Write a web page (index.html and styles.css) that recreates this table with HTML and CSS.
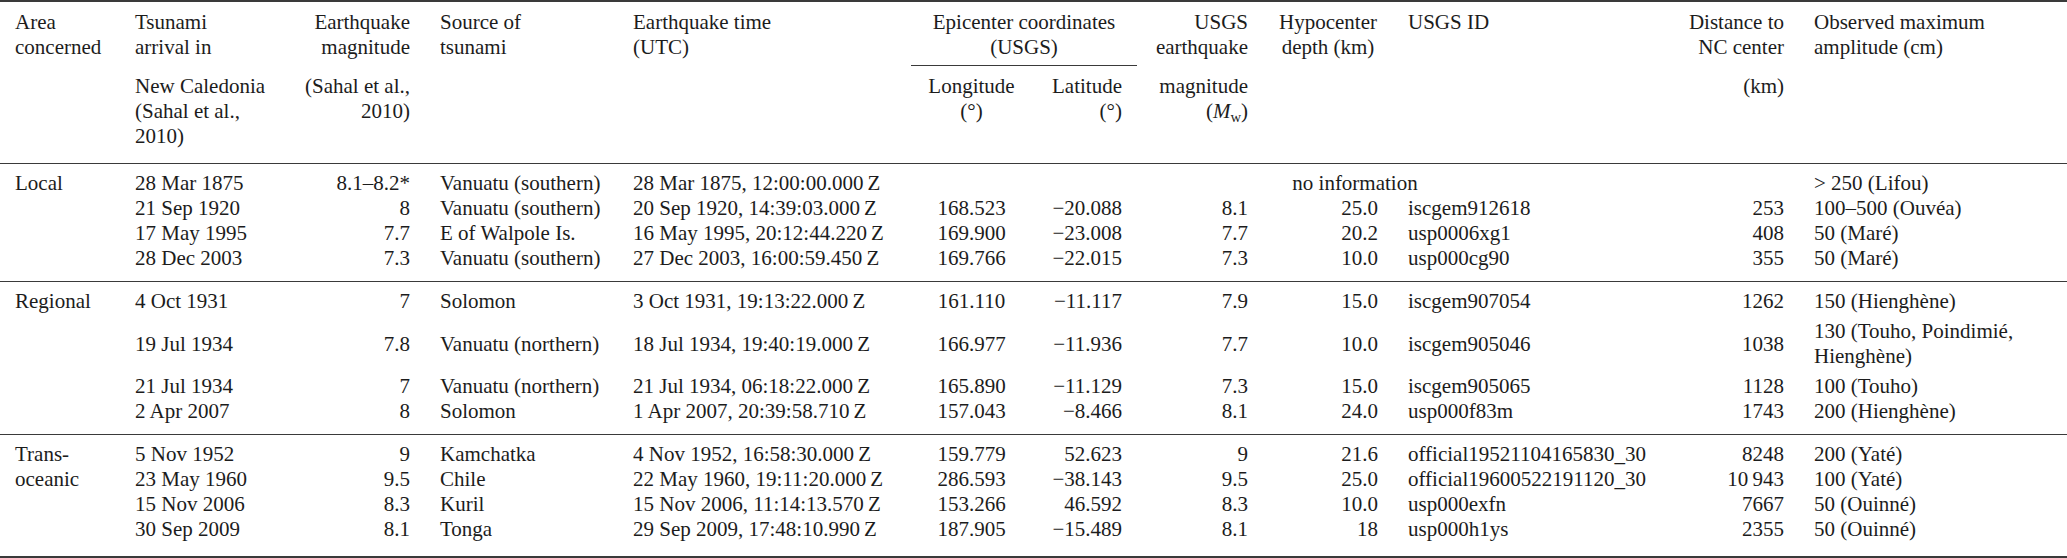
FILE: index.html
```html
<!DOCTYPE html>
<html lang="en">
<head>
<meta charset="utf-8">
<title>Tsunami events</title>
<link rel="stylesheet" href="styles.css">
</head>
<body>
<table class="tbl">
<colgroup>
<col class="w1"><col class="w2"><col class="w3"><col class="w4"><col class="w5"><col class="w6"><col class="w7"><col class="w8"><col class="w9"><col class="w10"><col class="w11"><col class="w12">
</colgroup>
<thead>
<tr class="h1">
<th class="l">Area<br>concerned</th>
<th class="l">Tsunami<br>arrival in</th>
<th class="r">Earthquake<br>magnitude</th>
<th class="l">Source of<br>tsunami</th>
<th class="l">Earthquake time<br>(UTC)</th>
<th class="c cmid" colspan="2">Epicenter coordinates<br>(USGS)</th>
<th class="r">USGS<br>earthquake</th>
<th class="c">Hypocenter<br>depth (km)</th>
<th class="l">USGS ID</th>
<th class="r">Distance to<br>NC center</th>
<th class="l">Observed maximum<br>amplitude (cm)</th>
</tr>
<tr class="h2">
<th></th>
<th class="l">New Caledonia<br>(Sahal et al.,<br>2010)</th>
<th class="r">(Sahal et al.,<br>2010)</th>
<th></th>
<th></th>
<th class="c">Longitude<br>(°)</th>
<th class="r">Latitude<br>(°)</th>
<th class="r">magnitude<br>(<i>M</i><sub>w</sub>)</th>
<th></th>
<th></th>
<th class="r">(km)</th>
<th></th>
</tr>
</thead>
<tbody>
<tr class="first">
<td class="l area" rowspan="4">Local</td>
<td class="l">28 Mar 1875</td>
<td class="r">8.1–8.2*</td>
<td class="l">Vanuatu (southern)</td>
<td class="l">28 Mar 1875, 12:00:00.000&thinsp;Z</td>
<td class="c" colspan="6">no information</td>
<td class="l">&gt; 250 (Lifou)</td>
</tr>
<tr>
<td class="l">21 Sep 1920</td>
<td class="r">8</td>
<td class="l">Vanuatu (southern)</td>
<td class="l">20 Sep 1920, 14:39:03.000&thinsp;Z</td>
<td class="c">168.523</td>
<td class="r">−20.088</td>
<td class="r">8.1</td>
<td class="r">25.0</td>
<td class="l">iscgem912618</td>
<td class="r">253</td>
<td class="l">100–500 (Ouvéa)</td>
</tr>
<tr>
<td class="l">17 May 1995</td>
<td class="r">7.7</td>
<td class="l">E of Walpole Is.</td>
<td class="l">16 May 1995, 20:12:44.220&thinsp;Z</td>
<td class="c">169.900</td>
<td class="r">−23.008</td>
<td class="r">7.7</td>
<td class="r">20.2</td>
<td class="l">usp0006xg1</td>
<td class="r">408</td>
<td class="l">50 (Maré)</td>
</tr>
<tr class="last">
<td class="l">28 Dec 2003</td>
<td class="r">7.3</td>
<td class="l">Vanuatu (southern)</td>
<td class="l">27 Dec 2003, 16:00:59.450&thinsp;Z</td>
<td class="c">169.766</td>
<td class="r">−22.015</td>
<td class="r">7.3</td>
<td class="r">10.0</td>
<td class="l">usp000cg90</td>
<td class="r">355</td>
<td class="l">50 (Maré)</td>
</tr>
</tbody>
<tbody>
<tr class="first">
<td class="l area" rowspan="4">Regional</td>
<td class="l">4 Oct 1931</td>
<td class="r">7</td>
<td class="l">Solomon</td>
<td class="l">3 Oct 1931, 19:13:22.000&thinsp;Z</td>
<td class="c">161.110</td>
<td class="r">−11.117</td>
<td class="r">7.9</td>
<td class="r">15.0</td>
<td class="l">iscgem907054</td>
<td class="r">1262</td>
<td class="l">150 (Hienghène)</td>
</tr>
<tr class="tall">
<td class="l">19 Jul 1934</td>
<td class="r">7.8</td>
<td class="l">Vanuatu (northern)</td>
<td class="l">18 Jul 1934, 19:40:19.000&thinsp;Z</td>
<td class="c">166.977</td>
<td class="r">−11.936</td>
<td class="r">7.7</td>
<td class="r">10.0</td>
<td class="l">iscgem905046</td>
<td class="r">1038</td>
<td class="l">130 (Touho, Poindimié, Hienghène)</td>
</tr>
<tr>
<td class="l">21 Jul 1934</td>
<td class="r">7</td>
<td class="l">Vanuatu (northern)</td>
<td class="l">21 Jul 1934, 06:18:22.000&thinsp;Z</td>
<td class="c">165.890</td>
<td class="r">−11.129</td>
<td class="r">7.3</td>
<td class="r">15.0</td>
<td class="l">iscgem905065</td>
<td class="r">1128</td>
<td class="l">100 (Touho)</td>
</tr>
<tr class="last">
<td class="l">2 Apr 2007</td>
<td class="r">8</td>
<td class="l">Solomon</td>
<td class="l">1 Apr 2007, 20:39:58.710&thinsp;Z</td>
<td class="c">157.043</td>
<td class="r">−8.466</td>
<td class="r">8.1</td>
<td class="r">24.0</td>
<td class="l">usp000f83m</td>
<td class="r">1743</td>
<td class="l">200 (Hienghène)</td>
</tr>
</tbody>
<tbody>
<tr class="first">
<td class="l area" rowspan="4">Trans-<br>oceanic</td>
<td class="l">5 Nov 1952</td>
<td class="r">9</td>
<td class="l">Kamchatka</td>
<td class="l">4 Nov 1952, 16:58:30.000&thinsp;Z</td>
<td class="c">159.779</td>
<td class="r">52.623</td>
<td class="r">9</td>
<td class="r">21.6</td>
<td class="l">official19521104165830_30</td>
<td class="r">8248</td>
<td class="l">200 (Yaté)</td>
</tr>
<tr>
<td class="l">23 May 1960</td>
<td class="r">9.5</td>
<td class="l">Chile</td>
<td class="l">22 May 1960, 19:11:20.000&thinsp;Z</td>
<td class="c">286.593</td>
<td class="r">−38.143</td>
<td class="r">9.5</td>
<td class="r">25.0</td>
<td class="l">official19600522191120_30</td>
<td class="r">10&thinsp;943</td>
<td class="l">100 (Yaté)</td>
</tr>
<tr>
<td class="l">15 Nov 2006</td>
<td class="r">8.3</td>
<td class="l">Kuril</td>
<td class="l">15 Nov 2006, 11:14:13.570&thinsp;Z</td>
<td class="c">153.266</td>
<td class="r">46.592</td>
<td class="r">8.3</td>
<td class="r">10.0</td>
<td class="l">usp000exfn</td>
<td class="r">7667</td>
<td class="l">50 (Ouinné)</td>
</tr>
<tr class="last end">
<td class="l">30 Sep 2009</td>
<td class="r">8.1</td>
<td class="l">Tonga</td>
<td class="l">29 Sep 2009, 17:48:10.990&thinsp;Z</td>
<td class="c">187.905</td>
<td class="r">−15.489</td>
<td class="r">8.1</td>
<td class="r">18</td>
<td class="l">usp000h1ys</td>
<td class="r">2355</td>
<td class="l">50 (Ouinné)</td>
</tr>
</tbody>
</table>
</body>
</html>
```
FILE: styles.css
```css
html, body {
  margin: 0;
  padding: 0;
  background: #ffffff;
}

.tbl {
  width: 2067px;
  table-layout: fixed;
  border-collapse: separate;
  border-spacing: 0;
  font-family: "Liberation Serif", "Times New Roman", serif;
  font-size: 21px;
  line-height: 25px;
  color: #1c1c1c;
  border-top: 2px solid #3a3a3a;
  border-bottom: 2px solid #3a3a3a;
}

.w1 { width: 120px; }
.w2 { width: 170px; }
.w3 { width: 135px; }
.w4 { width: 193px; }
.w5 { width: 293px; }
.w6 { width: 121px; }
.w7 { width: 105px; }
.w8 { width: 126px; }
.w9 { width: 130px; }
.w10 { width: 279px; }
.w11 { width: 127px; }
.w12 { width: 268px; }

.tbl th,
.tbl td {
  padding: 0 15px;
  font-weight: normal;
  white-space: nowrap;
}

.tbl th {
  vertical-align: top;
}

.tbl td {
  vertical-align: middle;
}

.tbl td.area {
  vertical-align: top;
}

.l { text-align: left; }
.r { text-align: right; }
.c { text-align: center; }

.h1 th {
  padding-top: 8px;
  padding-bottom: 5px;
}

.h1 th.cmid {
  border-bottom: 1px solid #3a3a3a;
}

.h2 th {
  padding-top: 8px;
  padding-bottom: 14px;
  border-bottom: 1px solid #3a3a3a;
}

.tbl td:last-child {
  white-space: normal;
}

.first td {
  padding-top: 7px;
}

.tall td {
  padding-top: 5px;
  padding-bottom: 5px;
}

.last td {
  padding-bottom: 10px;
  border-bottom: 1px solid #3a3a3a;
}

.end td {
  border-bottom: none;
  padding-bottom: 14px;
}

.tbl td.area {
  border-bottom: 1px solid #3a3a3a;
  padding-bottom: 10px;
}

.tbl tbody:last-child td.area {
  border-bottom: none;
  padding-bottom: 14px;
}

.tbl sub {
  font-size: 70%;
  vertical-align: -0.25em;
  line-height: 0;
}
```
